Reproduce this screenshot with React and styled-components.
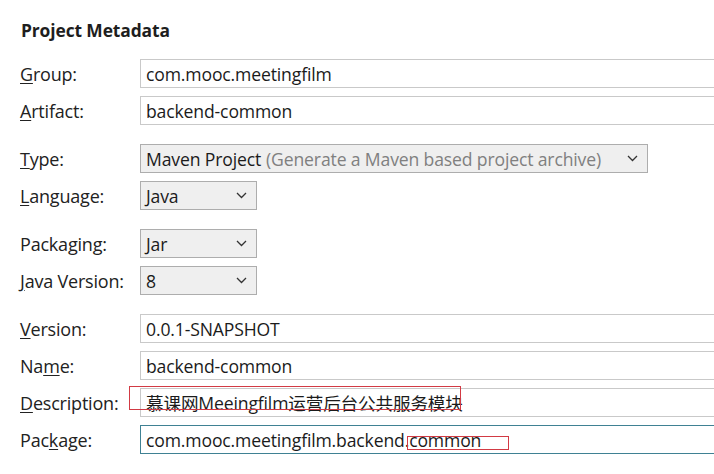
import React from "react";
import styled, { createGlobalStyle } from "styled-components";

const Global = createGlobalStyle`
  html, body { margin: 0; padding: 0; background: #ffffff; overflow: hidden; }
  body { width: 714px; height: 474px; font-family: "Open Sans", "Noto Sans CJK SC", sans-serif; color: #1b1b1b; }
`;

const Page = styled.div`
  padding: 19px 0 0 20px;
  display: flex;
  flex-direction: column;
  width: 694px;
  height: 455px;
  overflow: hidden;
`;

const Title = styled.h1`
  margin: 0 0 18px 1px;
  font-size: 17.4px;
  font-weight: 700;
  line-height: 22px;
  color: #1e1e1e;
  letter-spacing: -0.1px;
`;

const Groups = styled.div`
  display: flex;
  flex-direction: column;
  gap: 19px;
`;

const Group = styled.div`
  display: flex;
  flex-direction: column;
  gap: 8px;
`;

const Row = styled.div`
  display: grid;
  grid-template-columns: 120px 1fr;
  align-items: center;
  height: 29px;
`;

const Label = styled.label`
  font-size: 18px;
  color: #222;
  white-space: nowrap;
  letter-spacing: -0.2px;
  u { text-decoration: underline; text-underline-offset: 2px; text-decoration-thickness: 1px; }
`;

const Field = styled.div`
  position: relative;
  box-sizing: border-box;
  height: 29px;
  width: ${(p) => (p.$w ? `${p.$w}px` : "600px")};
  border: 1px solid ${(p) => (p.$focus ? "#3f8193" : p.$select ? "#adadad" : "#c9c9c9")};
  background: ${(p) => (p.$select ? "#efefef" : "#ffffff")};
  display: flex;
  align-items: center;
  padding: 0 0 0 5px;
  font-size: 17.6px;
  color: #1b1b1b;
  white-space: nowrap;
  letter-spacing: -0.15px;
`;

const Hint = styled.span`
  color: #808080;
  margin-left: 5px;
`;

const Chevron = styled.svg`
  position: absolute;
  right: 9px;
  top: 10px;
  width: 11px;
  height: 7px;
`;

const Mark = styled.div`
  position: absolute;
  border: 1px solid #d23a44;
  pointer-events: none;
  left: ${(p) => p.$l}px;
  top: ${(p) => p.$t}px;
  width: ${(p) => p.$w}px;
  height: ${(p) => p.$h}px;
  box-sizing: border-box;
`;

const Arrow = () => (
  <Chevron viewBox="0 0 11 7">
    <path d="M1 1 L5.5 5.5 L10 1" fill="none" stroke="#333" strokeWidth="1.3" />
  </Chevron>
);

const Select = ({ w, children }) => (
  <Field $select $w={w}>
    {children}
    <Arrow />
  </Field>
);

export default function App() {
  return (
    <>
      <Global />
      <Page>
        <Title>Project Metadata</Title>
        <Groups>
          <Group>
            <Row>
              <Label><u>G</u>roup:</Label>
              <Field>com.mooc.meetingfilm</Field>
            </Row>
            <Row>
              <Label><u>A</u>rtifact:</Label>
              <Field>backend-common</Field>
            </Row>
          </Group>
          <Group>
            <Row>
              <Label><u>T</u>ype:</Label>
              <Select w={508}>
                Maven Project<Hint>(Generate a Maven based project archive)</Hint>
              </Select>
            </Row>
            <Row>
              <Label><u>L</u>anguage:</Label>
              <Select w={117}>Java</Select>
            </Row>
          </Group>
          <Group>
            <Row>
              <Label>Packaging:</Label>
              <Select w={117}>Jar</Select>
            </Row>
            <Row>
              <Label><u>J</u>ava Version:</Label>
              <Select w={117}>8</Select>
            </Row>
          </Group>
          <Group>
            <Row>
              <Label><u>V</u>ersion:</Label>
              <Field>0.0.1-SNAPSHOT</Field>
            </Row>
            <Row>
              <Label>Na<u>m</u>e:</Label>
              <Field>backend-common</Field>
            </Row>
            <Row>
              <Label><u>D</u>escription:</Label>
              <Field>
                慕课网Meeingfilm运营后台公共服务模块
                <Mark $l={-12} $t={-3} $w={332} $h={24} />
              </Field>
            </Row>
            <Row>
              <Label>Pac<u>k</u>age:</Label>
              <Field $focus>
                com.mooc.meetingfilm.backend.common
                <Mark $l={266} $t={10} $w={102} $h={14} />
              </Field>
            </Row>
          </Group>
        </Groups>
      </Page>
    </>
  );
}
